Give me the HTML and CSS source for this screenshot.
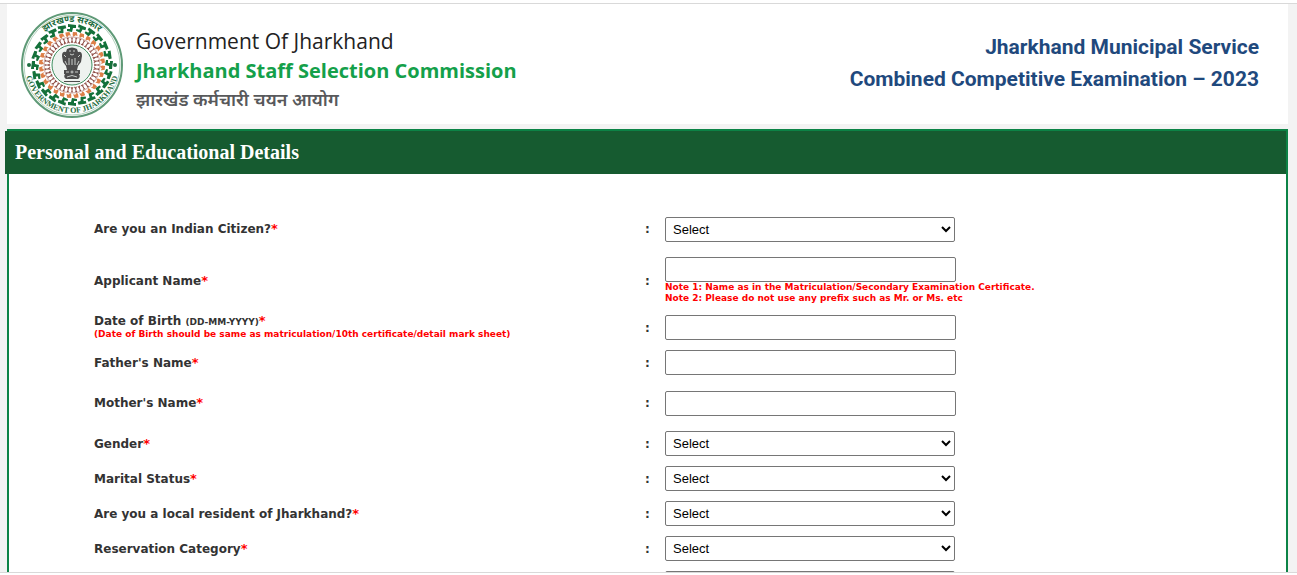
FILE: index.html
```
<!DOCTYPE html>
<html lang="en">

<head>
    <meta charset="UTF-8">
    <title>Jharkhand Staff Selection Commission</title>
    <link rel="stylesheet" href="styles.css">
</head>

<body>
    <div class="page">
        <header class="header">
            <svg class="logo" viewBox="-51 -53 102 106" role="img" aria-label="Government of Jharkhand emblem">
                <defs>
                    <path id="arc-top" d="M-42 0 A42 43 0 0 1 42 0" />
                    <path id="arc-bottom" d="M-47 0 A47 48 0 0 0 47 0" />
                    <path id="elephant" fill="#14713a" d="M-4 -41 L4 -40 L4 -37 L1 -37 L0 -33 L-5 -34 L-5 -36 L-2 -36 L-2 -38 L-4 -38 Z" />
                    <path id="flower" fill="#dd7f48" d="M-2 -33 L2 -33 L3 -29 L1 -30 L-1 -28 L-2 -30 Z" />
                    <path id="dancer" fill="none" stroke="#8d4a42" d="M-1 -27 H1 M0 -27 V-24 L-1 -22 M0 -24 L1 -22" />
                    <g id="quarter">
                        <use href="#elephant" />
                        <use href="#elephant" transform="rotate(15)" />
                        <use href="#elephant" transform="rotate(30)" />
                        <use href="#elephant" transform="rotate(45)" />
                        <use href="#elephant" transform="rotate(60)" />
                        <use href="#elephant" transform="rotate(75)" />
                        <use href="#flower" transform="rotate(5)" />
                        <use href="#flower" transform="rotate(18)" />
                        <use href="#flower" transform="rotate(31)" />
                        <use href="#flower" transform="rotate(44)" />
                        <use href="#flower" transform="rotate(57)" />
                        <use href="#flower" transform="rotate(70)" />
                        <use href="#flower" transform="rotate(82)" />
                        <use href="#dancer" />
                        <use href="#dancer" transform="rotate(9)" />
                        <use href="#dancer" transform="rotate(18)" />
                        <use href="#dancer" transform="rotate(27)" />
                        <use href="#dancer" transform="rotate(36)" />
                        <use href="#dancer" transform="rotate(45)" />
                        <use href="#dancer" transform="rotate(54)" />
                        <use href="#dancer" transform="rotate(63)" />
                        <use href="#dancer" transform="rotate(72)" />
                        <use href="#dancer" transform="rotate(81)" />
                    </g>
                </defs>
                <ellipse rx="50" ry="52" fill="#fff" stroke="#5f9a77" stroke-width="2" />
                <ellipse rx="48" ry="50" fill="none" stroke="#b5d3c0" stroke-width="1" />
                <use href="#quarter" />
                <use href="#quarter" transform="rotate(90)" />
                <use href="#quarter" transform="rotate(180)" />
                <use href="#quarter" transform="rotate(270)" />
                <circle r="28" fill="none" stroke="#c9a59f" stroke-width="1" />
                <circle r="20" fill="#eef2ef" stroke="#3f8f60" stroke-width="1" />
                <!-- lion capital -->
                <g fill="#4c4c4c">
                    <path d="M-5 -16 Q0 -19 5 -16 L6 -13 Q10 -14 10 -9 L9 -3 L6 1 L-6 1 L-9 -3 L-10 -9 Q-10 -14 -6 -13 Z" />
                    <path d="M-6 1 H6 L5 5 H-5 Z" />
                    <path d="M-8 5 H8 V9 H-8 Z" />
                    <path d="M-7 9 H7 Q9 12 6 14 H-6 Q-9 12 -7 9 Z" />
                    <path d="M-8 16 H8 V17 H-8 Z" />
                </g>
                <g fill="none" stroke="#c9cdca" stroke-width="1">
                    <path d="M-3 -14 H-1 M1 -14 H3 M-2 -11 Q0 -9 2 -11 M-3 -7 V0 M3 -7 V0 M0 -6 V0 M-8 -10 L-6 -8 M8 -10 L6 -8 M-7 -4 L-5 0 M7 -4 L5 0" />
                    <circle cy="7" r="1" />
                    <path d="M-6 7 H-3 M3 7 H6 M-5 12 Q0 9 5 12" />
                </g>
                <circle class="dot" cx="-43" r="2" />
                <circle class="dot" cx="43" r="2" />
                <text class="ring-text"><textPath href="#arc-top" startOffset="50%">झारखण्ड सरकार</textPath></text>
                <text class="ring-text ring-text-en"><textPath href="#arc-bottom" startOffset="50%">GOVERNMENT OF JHARKHAND</textPath></text>
            </svg>
            <div class="names">
                <div class="gov">Government Of Jharkhand</div>
                <div class="commission">Jharkhand Staff Selection Commission</div>
                <div class="hindi" lang="hi">झारखंड कर्मचारी चयन आयोग</div>
            </div>
            <div class="exam">Jharkhand Municipal Service<br>Combined Competitive Examination – 2023</div>
        </header>

        <main class="panel">
            <h1 class="title">Personal and Educational Details</h1>
            <form class="details">
                <table class="fields">
                    <colgroup>
                        <col class="col-label">
                        <col class="col-colon">
                        <col>
                    </colgroup>
                    <tr class="tall">
                        <td><label for="citizen">Are you an Indian Citizen?<span class="star">*</span></label></td>
                        <td>:</td>
                        <td><select id="citizen"><option>Select</option><option>Yes</option><option>No</option></select></td>
                    </tr>
                    <tr>
                        <td><label for="name">Applicant Name<span class="star">*</span></label></td>
                        <td>:</td>
                        <td>
                            <input type="text" id="name">
                            <div class="note">Note 1: Name as in the Matriculation/Secondary Examination Certificate.<br>Note 2: Please do not use any prefix such as Mr. or Ms. etc</div>
                        </td>
                    </tr>
                    <tr>
                        <td>
                            <label for="dob">Date of Birth <span class="format">(DD-MM-YYYY)</span><span class="star">*</span></label>
                            <div class="note">(Date of Birth should be same as matriculation/10th certificate/detail mark sheet)</div>
                        </td>
                        <td>:</td>
                        <td><input type="text" id="dob"></td>
                    </tr>
                    <tr>
                        <td><label for="father">Father's Name<span class="star">*</span></label></td>
                        <td>:</td>
                        <td><input type="text" id="father"></td>
                    </tr>
                    <tr class="tall">
                        <td><label for="mother">Mother's Name<span class="star">*</span></label></td>
                        <td>:</td>
                        <td><input type="text" id="mother"></td>
                    </tr>
                    <tr>
                        <td><label for="gender">Gender<span class="star">*</span></label></td>
                        <td>:</td>
                        <td><select id="gender"><option>Select</option></select></td>
                    </tr>
                    <tr>
                        <td><label for="marital">Marital Status<span class="star">*</span></label></td>
                        <td>:</td>
                        <td><select id="marital"><option>Select</option></select></td>
                    </tr>
                    <tr>
                        <td><label for="resident">Are you a local resident of Jharkhand?<span class="star">*</span></label></td>
                        <td>:</td>
                        <td><select id="resident"><option>Select</option></select></td>
                    </tr>
                    <tr>
                        <td><label for="category">Reservation Category<span class="star">*</span></label></td>
                        <td>:</td>
                        <td><select id="category"><option>Select</option></select></td>
                    </tr>
                    <tr>
                        <td></td>
                        <td></td>
                        <td><select aria-label="Category"><option>Select</option></select></td>
                    </tr>
                </table>
            </form>
        </main>
    </div>
</body>

</html>
```
FILE: styles.css
```
* {
    box-sizing: border-box;
}

body {
    margin: 0;
    padding: 3px 0 2px;
    height: 100vh;
    background-color: #fff;
    font-family: Verdana, "DejaVu Sans", sans-serif;
}

.page {
    height: 100%;
    overflow: hidden;
    padding: 0 9px 0 7px;
    background-color: #f3f3f3;
    border-top: 1px solid #d9d9d9;
    border-bottom: 1px solid #d9d9d9;
}

.header {
    display: flex;
    align-items: center;
    height: 120px;
    padding: 2px 29px 0 14px;
    margin-bottom: 5px;
    background-color: #fff;
}

.logo {
    width: 102px;
    height: 106px;
    margin-right: 13px;
}

.dot,
.ring-text {
    fill: #1f6e41;
}

.ring-text {
    font-family: "Noto Sans Devanagari", "Noto Sans", sans-serif;
    font-size: 9px;
    font-weight: bold;
    text-anchor: middle;
}

.ring-text-en {
    font-family: "Liberation Serif", serif;
    font-size: 8px;
}

.names {
    padding-top: 10px;
    font-family: "Open Sans", "Noto Sans Devanagari", sans-serif;
    line-height: 29px;
}

.gov {
    font-size: 21px;
    color: #222;
}

.commission {
    font-size: 20px;
    font-weight: bold;
    color: #14a04a;
}

.hindi {
    font-size: 18px;
    font-weight: 600;
    color: #58595b;
}

.exam {
    margin-left: auto;
    padding-bottom: 4px;
    font-family: Roboto, sans-serif;
    font-size: 21px;
    font-weight: bold;
    line-height: 32px;
    text-align: right;
    color: #1f497d;
}

.panel {
    border: 2px solid #0c8346;
    background-color: #fff;
}

.title {
    margin: 0 0 0 -4px;
    padding: 0 10px;
    background-color: #165b30;
    color: #fff;
    font-family: "Liberation Serif", serif;
    font-size: 20px;
    line-height: 43px;
}

.details {
    padding: 32px 90px 0 85px;
}

.fields {
    width: 100%;
    table-layout: fixed;
    border-collapse: collapse;
    font-size: 12px;
    font-weight: bold;
    line-height: 14px;
    color: #333;
}

.col-label {
    width: 50%;
}

.col-colon {
    width: 20px;
}

td {
    height: 35px;
    padding: 0;
}

.tall td {
    height: 46px;
}

td:last-child {
    padding: 5px 0;
}

input,
select {
    display: block;
    height: 25px;
    border: 1px solid #767676;
    border-radius: 2px;
    background-color: #fff;
    color: #000;
    font-family: "Liberation Sans", sans-serif;
    font-size: 13px;
}

input {
    width: 291px;
}

select {
    width: 290px;
    padding: 0 3px;
}

.star,
.note {
    color: #f00;
}

.star {
    font-size: 13px;
}

.note {
    padding-bottom: 1px;
    font-size: 9px;
    line-height: 11px;
}

.format {
    font-size: 9px;
}
```
